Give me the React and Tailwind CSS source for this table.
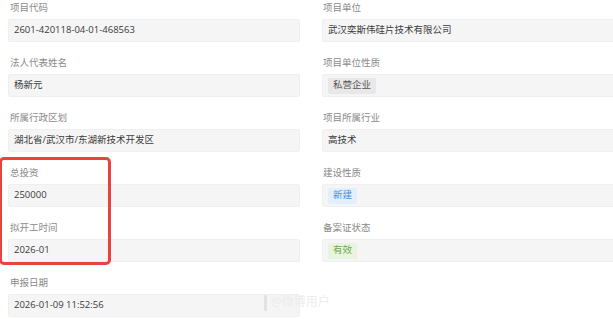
const font = { fontFamily: '"Open Sans", "Noto Sans CJK SC", sans-serif' };

const rows = [
    [
        { label: '项目代码', value: '2601-420118-04-01-468563' },
        { label: '项目单位', value: '武汉奕斯伟硅片技术有限公司' },
    ],
    [
        { label: '法人代表姓名', value: '杨新元' },
        { label: '项目单位性质', tag: '私营企业', tagClass: 'bg-[#e8e8e8] text-[#555]' },
    ],
    [
        { label: '所属行政区划', value: '湖北省/武汉市/东湖新技术开发区' },
        { label: '项目所属行业', value: '高技术' },
    ],
    [
        { label: '总投资', value: '250000' },
        { label: '建设性质', tag: '新建', tagClass: 'bg-[#e3effc] text-[#4a8fd9]' },
    ],
    [
        { label: '拟开工时间', value: '2026-01' },
        { label: '备案证状态', tag: '有效', tagClass: 'bg-[#e8f4de] text-[#6ba74a]' },
    ],
    [
        { label: '申报日期', value: '2026-01-09 11:52:56' },
        null,
    ],
];

function Field({ item, left }) {
    if (!item) return <div />;
    return (
        <div className="mb-[13px]">
            <div className={`h-[19px] leading-[15px] text-[9.5px] text-[#8a8a8a] ${left ? 'pl-[2px]' : 'pl-[1px]'}`}>
                {item.label}
            </div>
            <div className="h-[23px] bg-[#f5f5f5] border border-[#efefef] rounded-[2px] flex items-center pl-[5px] text-[9.5px] text-[#3a3a3a]">
                {item.tag ? (
                    <span className={`h-[16px] px-[5px] flex items-center rounded-[2px] ${item.tagClass}`}>{item.tag}</span>
                ) : (
                    item.value
                )}
            </div>
        </div>
    );
}

export default function App() {
    return (
        <div className="relative w-[613px] h-[319px] overflow-hidden bg-white" style={font}>
            <div className="grid grid-cols-[292px_300px] gap-x-[22px] pl-[8px]">
                {rows.map((row, i) => (
                    <div key={i} className="contents">
                        <Field item={row[0]} left />
                        <Field item={row[1]} />
                    </div>
                ))}
            </div>

            {/* red highlight annotation */}
            <div className="absolute left-[-1px] top-[157px] w-[112px] h-[108px] border-[3.5px] border-[#e8433d] rounded-[5px]" />

            {/* faint watermark */}
            <div className="absolute left-[264px] top-[293px] flex items-end gap-[4px] text-[#ececec] text-[12px]">
                <span className="w-[3px] h-[16px] bg-[#e2e2e2] rounded-[1px]" />
                <span>@微博用户</span>
            </div>
        </div>
    );
}
